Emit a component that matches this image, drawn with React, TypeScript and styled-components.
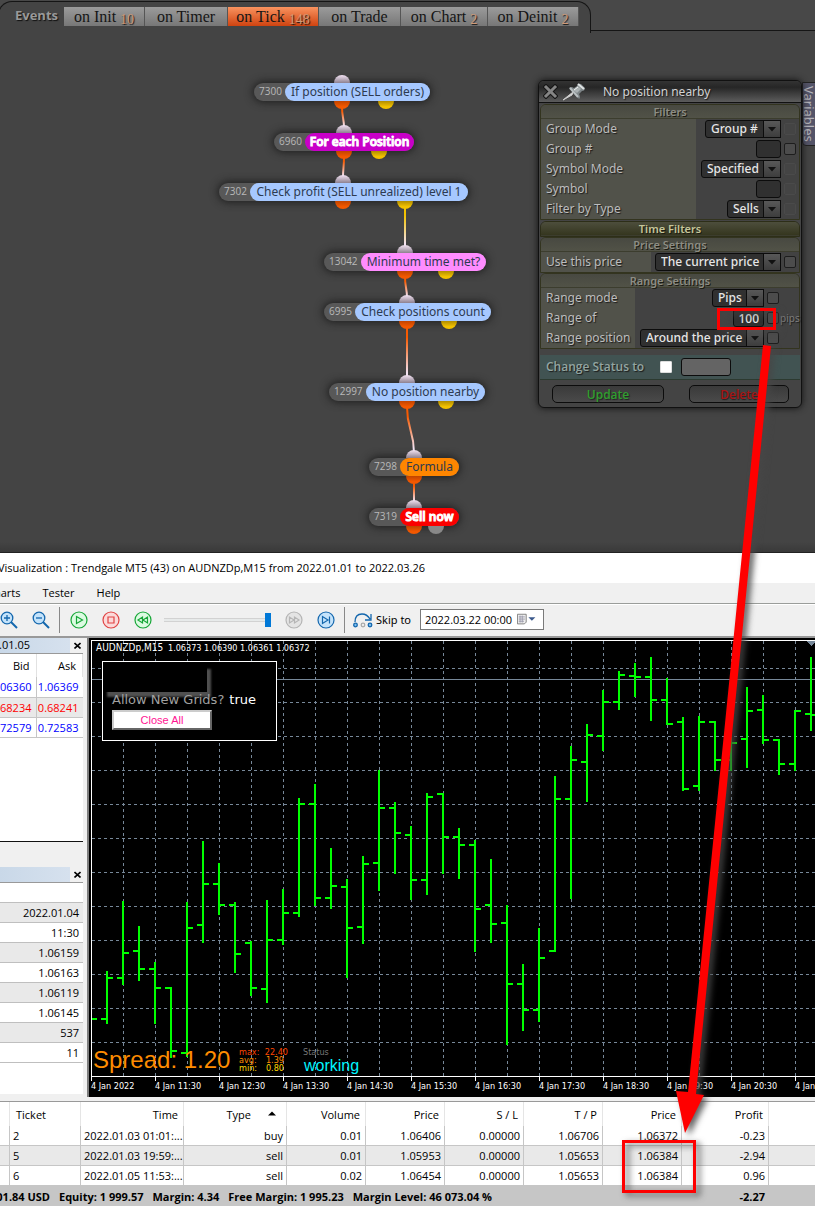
import React from 'react';
import styled, { createGlobalStyle, css } from 'styled-components';

const Global = createGlobalStyle`
  * { box-sizing: border-box; }
  body { margin: 0; background: #fff; }
  #root { overflow: hidden; position: relative; }
  button, input, select { font: inherit; margin: 0; border-radius: 0; }
`;

const ui = `'Noto Sans', 'Open Sans', sans-serif`;
const desk = `'Open Sans', 'Noto Sans', sans-serif`;

/* ---------- Strategy builder ---------- */

const Builder = styled.section`
  position: relative;
  height: 553px;
  overflow: hidden;
  background: linear-gradient(#444 0, #444 542px, #393939 552px);
  border-bottom: 1px solid #222;
  font: 12px/18px ${ui};
`;

const Header = styled.header`
  display: flex;
  height: 31px;
  background: #484848;
`;

const EventBar = styled.nav`
  display: flex;
  align-items: flex-start;
  height: 32px;
  margin: 1px 0 0 -2px;
  padding: 5px 11px 0 16px;
  background: #444;
  border: solid #151515;
  border-width: 1px 1px 0 1px;
  border-radius: 14px 14px 0 0;
`;

const HeaderRest = styled.div`
  flex: 1;
  border-bottom: 1px solid #151515;
`;

const EventTitle = styled.span`
  width: 49px;
  font: 700 13px/17px ${desk};
  color: #999;
  text-shadow: 1px 1px 1px #111;
`;

const Tab = styled.button<{ $w: number; $on?: boolean }>`
  display: flex;
  justify-content: center;
  width: ${(p) => p.$w}px;
  height: 19px;
  padding: 0;
  border: 0;
  border-right: 1px solid #555;
  font: 16px/20px 'Liberation Serif', serif;
  color: #151515;
  background: ${(p) => (p.$on ? 'linear-gradient(#f9935f, #cf4310)' : 'linear-gradient(#9b9b9b, #777)')};
`;

const Count = styled.small`
  margin: 5px 0 0 4px;
  font-size: 14px;
  line-height: 16px;
  color: #d09a76;
  text-shadow: 1px 1px 1px #111;
`;

const tabs = [
  { name: 'on Init', count: '10', w: 81 },
  { name: 'on Timer', w: 83 },
  { name: 'on Tick', count: '148', w: 91, on: true },
  { name: 'on Trade', w: 82 },
  { name: 'on Chart', count: '2', w: 87 },
  { name: 'on Deinit', count: '2', w: 91 },
];

type FlowNode = {
  id: string; text: string; x: number; y: number; idW: number; w: number;
  port: number; alt?: number; altColor?: string; color: string; bold?: boolean;
};

const blue = '#a6c8ff';
const nodes: FlowNode[] = [
  { id: '7300', text: 'If position (SELL orders)', x: 254, y: 83, idW: 31, w: 145, port: 342, alt: 386, color: blue },
  { id: '6960', text: 'For each Position', x: 274, y: 133, idW: 31, w: 109, port: 344, alt: 379, color: '#c800c8', bold: true },
  { id: '7302', text: 'Check profit (SELL unrealized) level 1', x: 219, y: 183, idW: 31, w: 218, port: 343, alt: 405, color: blue },
  { id: '13042', text: 'Minimum time met?', x: 324, y: 253, idW: 37, w: 125, port: 405, alt: 446, color: '#ff8cff' },
  { id: '6995', text: 'Check positions count', x: 324, y: 303, idW: 31, w: 136, port: 407, alt: 449, color: blue },
  { id: '12997', text: 'No position nearby', x: 329, y: 383, idW: 37, w: 119, port: 407, alt: 446, color: blue },
  { id: '7298', text: 'Formula', x: 369, y: 458, idW: 31, w: 59, port: 414, color: '#ff8600' },
  { id: '7319', text: 'Sell now', x: 369, y: 508, idW: 31, w: 59, port: 414, alt: 436, altColor: '#888', color: '#fb0000', bold: true },
];

const Links = styled.svg`
  position: absolute;
  left: 0;
  top: 0;
  width: 500px;
  height: 552px;
`;

const NodeBox = styled.div<{ $x: number; $y: number }>`
  position: absolute;
  left: ${(p) => p.$x}px;
  top: ${(p) => p.$y}px;
  display: flex;
  height: 18px;
  border-radius: 9px;
  background: #585858;
  box-shadow: 0 0 9px 1px #1c1c1c;
`;

const NodeId = styled.span<{ $w: number }>`
  width: ${(p) => p.$w}px;
  padding-left: 5px;
  font: 10px/17px ${desk};
  color: #b8b8b8;
`;

const NodeLabel = styled.span<{ $w: number; $c: string; $bold?: boolean }>`
  width: ${(p) => p.$w}px;
  border-radius: 9px;
  background: ${(p) => p.$c};
  color: ${(p) => (p.$bold ? '#fff' : '#2d3a50')};
  font: ${(p) => (p.$bold ? `600 12px/18px ${desk}` : `12px/18px ${ui}`)};
  -webkit-text-stroke: ${(p) => (p.$bold ? '1px #fff' : '0')};
  paint-order: stroke;
  text-align: center;
  white-space: nowrap;
`;

function FlowCanvas() {
  const link = (x1: number, y1: number, x2: number, y2: number, c: string, i: number) => (
    <g key={i}>
      <linearGradient id={`lk${i}`} gradientUnits="userSpaceOnUse" x1="0" x2="0" y1={y1} y2={y2}>
        <stop offset=".2" stopColor={c} /><stop offset=".9" stopColor="#f3e3f3" />
      </linearGradient>
      <path d={`M${x1} ${y1}C${x1} ${(y1 + y2) / 2} ${x2} ${(y1 + y2) / 2} ${x2} ${y2}`} fill="none" stroke={`url(#lk${i})`} strokeWidth="2" />
    </g>
  );
  const half = (x: number, y: number, c: string) => <path d={`M${x - 8} ${y}a8 8 0 0 0 16 0z`} fill={c} />;
  return (
    <>
      {nodes.map((n) => (
        <NodeBox key={n.id} $x={n.x} $y={n.y}>
          <NodeId $w={n.idW}>{n.id}</NodeId>
          <NodeLabel $w={n.w} $c={n.color} $bold={n.bold}>{n.text}</NodeLabel>
        </NodeBox>
      ))}
      <Links aria-hidden="true">
        <defs>
          <linearGradient id="in" x1="0" x2="0" y1="0" y2="1"><stop stopColor="#f3e3f3" /><stop offset="1" stopColor="#8d818f" /></linearGradient>
          <linearGradient id="out" x1="0" x2="0" y1="0" y2="1"><stop stopColor="#c04400" /><stop offset=".7" stopColor="#f35800" /></linearGradient>
          <linearGradient id="alt" x1="0" x2="0" y1="0" y2="1"><stop stopColor="#b08c00" /><stop offset=".7" stopColor="#f2c200" /></linearGradient>
        </defs>
        {nodes.slice(1).map((n, i) => {
          const p = nodes[i];
          const yellow = i === 2;
          return link(yellow ? 405 : p.port, p.y + 24, n.port, n.y - 5, yellow ? '#f2c200' : '#f85a00', i);
        })}
        {nodes.map((n) => (
          <g key={n.id}>
            <path d={`M${n.port - 8} ${n.y}a8 8 0 0 1 16 0z`} fill="url(#in)" />
            {half(n.port, n.y + 18, 'url(#out)')}
            {n.alt && half(n.alt, n.y + 18, n.altColor || 'url(#alt)')}
          </g>
        ))}
      </Links>
    </>
  );
}

const Inspector = styled.aside`
  position: absolute;
  left: 538px;
  top: 80px;
  width: 264px;
  padding-bottom: 4px;
  border: 1px solid #111;
  border-radius: 6px;
  background: #444;
  box-shadow: 0 0 7px #111;
  color: #bdbdbd;
  text-shadow: 1px 1px 1px #1c1c1c;
`;

const InspectorTitle = styled.header`
  display: flex;
  align-items: center;
  height: 22px;
  margin-bottom: 1px;
  padding-left: 4px;
  border-bottom: 1px solid #111;
  border-radius: 5px 5px 0 0;
  background: linear-gradient(#333, #262626 30%, #5c5c5c);
  color: #d2d2d2;
  svg { margin-right: 4px; }
  h2 { margin: 0 0 0 13px; font: 12px/20px ${ui}; }
`;

const IconButton = styled.button`
  display: flex;
  padding: 0;
  border: 0;
  background: none;
`;

const Group = styled.fieldset<{ $labelW: number }>`
  min-width: 0;
  margin: 0 1px;
  padding: 0;
  border: 1px solid #33341f;
  border-radius: 6px 6px 0 0;
  background: linear-gradient(90deg, #51524a ${(p) => p.$labelW}px, #424242 ${(p) => p.$labelW}px);
`;

const GroupTitle = styled.h3<{ $strong?: boolean }>`
  height: 14px;
  margin: 0;
  border-bottom: 1px solid #3c3d2e;
  border-radius: 5px 5px 0 0;
  background: ${(p) => (p.$strong ? 'linear-gradient(#4d4e3c, #35361f)' : 'linear-gradient(#484941, #515247)')};
  color: ${(p) => (p.$strong ? '#c6c69a' : '#8d8d84')};
  font: 600 11px/13px ${ui};
  text-align: center;
  text-shadow: 1px 1px 0 #1c1c14;
`;

const Divider = styled.div`
  margin: 1px 1px 0;
  border: 1px solid #2d2e18;
  border-radius: 6px 6px 0 0;
`;

const Field = styled.div<{ $wide?: boolean }>`
  display: flex;
  align-items: center;
  height: 20px;
  padding: 0 ${(p) => (p.$wide ? 0 : 3)}px 0 5px;
  > label { flex: 1; white-space: nowrap; }
`;

const ctrl = css`
  height: 18px;
  border: 1px solid #0c0c0c;
  border-radius: 3px;
  background: #303030;
  color: #e6e6e6;
`;

const SelectWrap = styled.span`
  position: relative;
  display: flex;
`;

const Select = styled.select<{ $w: number }>`
  ${ctrl}
  width: ${(p) => p.$w}px;
  padding: 0 18px 0 5px;
  appearance: none;
  font: 500 12px/16px ${ui};
`;

const Arrow = styled.span`
  position: absolute;
  right: 0;
  top: 0;
  display: grid;
  place-items: center;
  width: 18px;
  height: 18px;
  border: 1px solid #0c0c0c;
  background: linear-gradient(#585858, #3d3d3d);
  pointer-events: none;
`;

const TextBox = styled.input<{ $w: number }>`
  ${ctrl}
  width: ${(p) => p.$w}px;
  padding: 0 4px;
  font: 500 12px/16px ${ui};
  text-align: right;
`;

const Check = styled.input<{ $dim?: boolean }>`
  appearance: none;
  width: 12px;
  height: 12px;
  margin: 0 0 0 3px;
  border: 1px solid ${(p) => (p.$dim ? '#4a4a4a' : '#1d1d1d')};
  border-radius: 2px;
  background: ${(p) => (p.$dim ? '#444' : '#4c4c4c')};
`;

const Unit = styled.span`
  width: 20px;
  padding-left: 1px;
  font-size: 10px;
  color: #7d7d7d;
`;

const StatusRow = styled.div`
  display: flex;
  align-items: center;
  height: 25px;
  margin: 6px 1px 0;
  padding-left: 6px;
  border-bottom: 1px solid #2c3a30;
  background: #415352;
  color: #93a5a1;
  font: 600 12px/18px ${desk};
  label { width: 114px; }
`;

const WhiteCheck = styled.input`
  appearance: none;
  width: 12px;
  height: 12px;
  background: #fff;
  border: 1px solid #ddd;
  border-radius: 1px;
`;

const StatusText = styled.input`
  ${ctrl}
  width: 50px;
  margin-left: 9px;
  background: #646464;
`;

const Actions = styled.div`
  display: flex;
  justify-content: space-between;
  padding: 5px 12px 0 13px;
`;

const Action = styled.button<{ $w: number; $c: string }>`
  ${ctrl}
  width: ${(p) => p.$w}px;
  border-radius: 5px;
  background: linear-gradient(#3a3a3a, #4a4a4a);
  font: 600 12px/16px ${desk};
  color: ${(p) => p.$c};
  text-shadow: 1px 1px 1px #222;
`;

const VariablesTab = styled.button`
  position: absolute;
  right: -1px;
  top: 82px;
  width: 14px;
  height: 64px;
  padding: 0;
  writing-mode: vertical-rl;
  border: 1px solid #222;
  border-radius: 0 0 0 4px;
  background: #545468;
  color: #b4b4bc;
  font: 13px/12px ${ui};
`;

function Dropdown({ id, w, value }: { id: string; w: number; value: string }) {
  return (
    <SelectWrap>
      <Select id={id} $w={w} defaultValue={value}><option>{value}</option></Select>
      <Arrow><svg width="8" height="5"><path d="M0 0h8L4 4.5z" fill="#111" /></svg></Arrow>
    </SelectWrap>
  );
}

type RowSpec = { label: string; w: number; value?: string; text?: boolean; dim?: boolean; unit?: string };

function Rows({ rows, unitCol }: { rows: RowSpec[]; unitCol?: boolean }) {
  return (
    <>
      {rows.map((r) => {
        const id = r.label.replace(/\W+/g, '-').toLowerCase();
        return (
          <Field key={r.label} $wide={unitCol}>
            <label htmlFor={id}>{r.label}</label>
            {r.text ? <TextBox id={id} $w={r.w} defaultValue={r.value} /> : <Dropdown id={id} w={r.w} value={r.value || ''} />}
            <Check type="checkbox" aria-label={`${r.label} variable`} $dim={r.dim} />
            {unitCol && <Unit>{r.unit}</Unit>}
          </Field>
        );
      })}
    </>
  );
}

function NodeInspector() {
  return (
    <Inspector>
      <InspectorTitle>
        <IconButton aria-label="Close">
          <svg width="15" height="15" viewBox="0 0 15 15"><path d="M3 3l9 9M12 3l-9 9" stroke="#151515" strokeWidth="5" strokeLinecap="square" /><path d="M3 3l9 9M12 3l-9 9" stroke="#858585" strokeWidth="3" strokeLinecap="square" /></svg>
        </IconButton>
        <IconButton aria-label="Pin">
          <svg width="24" height="18" viewBox="0 0 24 18">
            <path d="M1 17l10-8-1 3z" fill="#ddd" stroke="#ccc" />
            <path d="M7 5q2-2 5 0l3-2q0-3 4-2l4 4q0 3-3 3l-3 3q2 4 0 5z" fill="#7d8487" />
            <path d="M8 5l8 9" stroke="#b9bfc1" strokeWidth="2" />
            <path d="M11 7l5-4 3 3-4 4z" fill="#aab1b3" /><path d="M16 1l6 5" stroke="#dfe3e4" strokeWidth="2" /><path d="M12 7l4-3" stroke="#f2f4f4" />
          </svg>
        </IconButton>
        <h2>No position nearby</h2>
      </InspectorTitle>
      <Group $labelW={155}>
        <GroupTitle>Filters</GroupTitle>
        <Rows rows={[
          { label: 'Group Mode', w: 76, value: 'Group #', dim: true },
          { label: 'Group #', w: 25, text: true },
          { label: 'Symbol Mode', w: 80, value: 'Specified', dim: true },
          { label: 'Symbol', w: 25, text: true, dim: true },
          { label: 'Filter by Type', w: 54, value: 'Sells', dim: true },
        ]} />
      </Group>
      <Divider><GroupTitle $strong>Time Filters</GroupTitle></Divider>
      <Group $labelW={110}>
        <GroupTitle>Price Settings</GroupTitle>
        <Rows rows={[{ label: 'Use this price', w: 126, value: 'The current price' }]} />
      </Group>
      <Group $labelW={94}>
        <GroupTitle>Range Settings</GroupTitle>
        <Rows unitCol rows={[
          { label: 'Range mode', w: 52, value: 'Pips' },
          { label: 'Range of', w: 31, value: '100', text: true, unit: 'pips' },
          { label: 'Range position', w: 124, value: 'Around the price' },
        ]} />
      </Group>
      <StatusRow>
        <label htmlFor="st">Change Status to</label>
        <WhiteCheck id="st" type="checkbox" />
        <StatusText aria-label="Status text" />
      </StatusRow>
      <Actions>
        <Action $w={112} $c="#2f9f2f">Update</Action>
        <Action $w={100} $c="#a81414">Delete</Action>
      </Actions>
    </Inspector>
  );
}

/* ---------- Tester window ---------- */

const Tester = styled.section`
  background: #f0f0f0;
  font: 11px/20px ${desk};
  color: #000;
`;

const TitleBar = styled.h1`
  height: 30px;
  margin: 0 0 0 -2px;
  background: #fff;
  font: 11px/30px ${desk};
  white-space: nowrap;
`;

const MenuBar = styled.nav`
  display: flex;
  gap: 22px;
  height: 21px;
  margin-left: -13px;
  border-bottom: 1px solid #9a9d9a;
`;

const MenuItem = styled.button`
  padding: 0;
  border: 0;
  background: none;
  font: 11px/20px ${desk};
`;

const Toolbar = styled.div`
  display: flex;
  align-items: center;
  height: 32px;
  margin-left: -7px;
  padding-bottom: 2px;
  border-top: 1px solid #fff;
`;

const Tool = styled.button`
  display: grid;
  place-items: center;
  width: 32px;
  height: 28px;
  padding: 0;
  border: 0;
  background: none;
`;

const Sep = styled.i<{ $l: number; $r: number }>`
  width: 1px;
  height: 26px;
  margin: 0 ${(p) => p.$r}px 0 ${(p) => p.$l}px;
  background: #888;
`;

const Speed = styled.input`
  appearance: none;
  width: 107px;
  height: 16px;
  margin: 0 7px 0 5px;
  background: linear-gradient(#d2d2d2, #d2d2d2) 0 6px / 100% 1px no-repeat, linear-gradient(#e7eaea, #e7eaea) 0 7px / 100% 2px no-repeat, linear-gradient(#d2d2d2, #d2d2d2) 0 9px / 100% 1px no-repeat;
  &::-webkit-slider-thumb {
    appearance: none;
    width: 6px;
    height: 14px;
    background: #0078d7;
  }
`;

const SkipLabel = styled.label`
  display: flex;
  align-items: center;
  gap: 3px;
  width: 67px;
  font: 12px/20px 'Noto Sans', sans-serif;
  font-size: 11px;
  white-space: nowrap;
`;

const DateBox = styled.span`
  display: flex;
  align-items: center;
  gap: 2px;
  width: 124px;
  height: 21px;
  padding: 0 5px 0 4px;
  background: #fff;
  border: 1px solid #7a7a7a;
  input {
    width: 90px;
    padding: 0;
    border: 0;
    background: none;
    font: 11px/18px ${desk};
  }
`;

const Workspace = styled.div`
  display: flex;
  border-top: 2px solid #999;
`;

const SideColumn = styled.div`
  display: flex;
  flex-direction: column;
  width: 89px;
  overflow: hidden;
  padding-right: 4px;
  border-right: 2px solid #7e7e7e;
`;

const PaneHead = styled.div`
  display: flex;
  justify-content: space-between;
  height: 16px;
  border-bottom: 1px solid #999;
  font: 11px/14px ${desk};
  span {
    display: flex;
    justify-content: flex-end;
    width: 70px;
    padding-right: 40px;
    background: linear-gradient(90deg, #c9d8e8, #d6e1ee);
  }
`;

const CloseButton = styled.button`
  display: grid;
  place-items: center;
  width: 11px;
  padding: 0;
  border: 0;
  background: none;
`;

const Pane = styled.div<{ $h: number; $gap?: boolean }>`
  height: ${(p) => p.$h}px;
  background: #fff;
  border-bottom: ${(p) => (p.$gap ? '1px solid #111' : '0')};
  margin-bottom: ${(p) => (p.$gap ? 25 : 3)}px;
`;

const Quotes = styled.table`
  width: 103px;
  margin-left: -20px;
  border-collapse: collapse;
  table-layout: fixed;
  font: 11px/19px ${desk};
  th { height: 23px; font-weight: 400; text-align: right; padding: 0 6px 0 0; border-right: 1px solid #e2e2e2; }
  td { height: 20px; padding: 0 4px 0 0; text-align: right; border-bottom: 1px solid #c6c6c6; }
  td:first-child { border-right: 1px solid #c6c6c6; }
`;

const QuoteRow = styled.tr<{ $c: string; $alt?: boolean }>`
  color: ${(p) => p.$c};
  background: ${(p) => (p.$alt ? '#e9e9e9' : '#fff')};
`;

const DataList = styled.ul`
  margin: 0;
  padding: 0;
  list-style: none;
  font: 11px/19px ${desk};
  li {
    height: 20px;
    padding-right: 4px;
    text-align: right;
    border-bottom: 1px solid #bfbfbf;
  }
  li:nth-child(even) { background: #e9e9e9; }
`;

const ChartArea = styled.div`
  position: relative;
  flex: 1;
  min-width: 0;
  height: 459px;
  background: #000;
  svg { display: block; width: 100%; height: 459px; }
`;

const InfoBox = styled.div`
  position: absolute;
  left: 13px;
  top: 23px;
  width: 175px;
  height: 80px;
  overflow: hidden;
  padding: 4px 0 0 2px;
  border: 1px solid #fff;
  background: #000;
  font: 13px/16px 'DejaVu Sans', sans-serif;
  color: #a0a0a0;
  p { margin: 0 0 2px 7px; white-space: pre; }
  b { font-weight: 400; color: #fff; margin-left: 5px; }
`;

const Blank = styled.div`
  width: 102px;
  height: 26px;
  background: #000;
  box-shadow: 3px 4px 2px 1px #505050;
`;

const CloseAll = styled.button`
  display: block;
  width: 100px;
  height: 20px;
  margin: 0 0 0 7px;
  padding: 0;
  background: #fff;
  border: 2px solid;
  border-color: #ccc #666 #666 #ccc;
  font: 11px/16px 'Liberation Sans', sans-serif;
  color: #ff1493;
`;

/* open, high, low, close as vertical positions, one bar every 16 px */
const bars = [
  [1019, 1017, 1020, 1019], [1019, 971, 1024, 978], [978, 901, 985, 953], [951, 926, 981, 969], [969, 962, 1024, 988],
  [988, 987, 1058, 1051], [1053, 902, 1057, 928], [925, 841, 943, 884], [884, 863, 915, 905], [905, 902, 973, 954],
  [943, 941, 996, 988], [989, 900, 1003, 940], [940, 889, 945, 913], [913, 798, 917, 804], [804, 784, 906, 898],
  [898, 848, 909, 886], [887, 879, 978, 928], [927, 856, 944, 864], [863, 770, 891, 808], [808, 802, 874, 833],
  [835, 826, 900, 880], [880, 793, 895, 797], [794, 793, 874, 837], [837, 828, 879, 845], [845, 840, 952, 909],
  [905, 859, 943, 924], [923, 905, 1045, 984], [984, 964, 1031, 1010], [1010, 928, 1022, 958], [951, 776, 952, 799],
  [799, 746, 899, 760], [762, 724, 802, 735], [736, 690, 751, 702], [702, 671, 710, 675], [676, 663, 697, 677],
  [677, 657, 721, 700], [700, 678, 725, 724], [722, 717, 791, 789], [786, 716, 791, 722], [722, 721, 771, 760],
  [760, 733, 771, 743], [739, 687, 768, 711], [710, 695, 744, 740], [740, 739, 775, 764], [764, 710, 771, 711],
  [714, 657, 731, 715],
];

const times = ['2022', '11:30', '12:30', '13:30', '14:30', '15:30', '16:30', '17:30', '18:30', '19:30', '20:30', '21:30'];

function PriceChart() {
  return (
    <svg role="img" aria-label="AUDNZDp M15 price chart">
      <g transform="translate(-89 -638)" shapeRendering="crispEdges">
        <g stroke="#778899" strokeDasharray="3 3">
          {Array.from({ length: 60 }, (_, i) => <path key={i} d={`M${123.5 + 32 * i} 641V1076`} />)}
          {Array.from({ length: 12 }, (_, i) => <path key={i} d={`M92 ${668.5 + 34 * i}H2000`} />)}
        </g>
        <path d="M92 679.5H2000" stroke="#778899" />
        <path d="M806 641h10l-5 5z" fill="#778899" />
        <g stroke="#0f0" strokeWidth="2">
          {bars.map(([o, h, l, c], i) => {
            const x = 91 + 16 * i;
            return <path key={i} d={i ? `M${x} ${h}V${l}M${x - 6} ${o}H${x}M${x} ${c}H${x + 6}` : `M${x} ${c}H${x + 6}`} />;
          })}
        </g>
        <path d="M91.5 1077V640.5H2000M91 1076.5H2000" stroke="#fff" fill="none" />
        {times.map((t, i) => <path key={t} d={`M${91.5 + 64 * i} 1077v4`} stroke="#fff" />)}
      </g>
      <g transform="translate(-89 -638)" fill="#fff" fontFamily="DejaVu Sans Condensed, DejaVu Sans, sans-serif" fontSize="9">
        {times.map((t, i) => <text key={t} x={91 + 64 * i} y="1089">4 Jan {t}</text>)}
        <text x="96" y="651" fontSize="10">AUDNZDp,M15</text>
        <text x="168" y="651">1.06373 1.06390 1.06361 1.06372</text>
        <text x="93" y="1068" fontSize="24" fontFamily="Liberation Sans, sans-serif" fill="#ff8c00">Spread: 1.20</text>
        <text x="239" y="1055" fill="#ff4500">max:</text><text x="288" y="1055" textAnchor="end" fill="#ff4500">22.40</text>
        <text x="239" y="1063" fill="#ff8c00">avg:</text><text x="284" y="1063" textAnchor="end" fill="#ff8c00">1.39</text>
        <text x="239" y="1071" fill="#ffd700">min:</text><text x="284" y="1071" textAnchor="end" fill="#ffd700">0.80</text>
        <text x="303" y="1055" fill="#777">Status</text>
        <text x="304" y="1071" fontSize="16" fontFamily="Liberation Sans, sans-serif" fill="#00f5ff">working</text>
      </g>
    </svg>
  );
}

const Trades = styled.table`
  width: 100%;
  margin-top: 4px;
  border-top: 1px solid #999;
  border-collapse: separate;
  border-spacing: 0;
  table-layout: fixed;
  background: #fff;
  font: 11px/19px ${desk};
  th, td { white-space: nowrap; overflow: hidden; text-align: right; }
  th { height: 24px; padding: 0 5px 0 0; border-right: 1px solid #e5e5e5; font-weight: 400; }
  tbody td { height: 20px; padding: 0 3px 0 0; border: solid #c6c6c6; border-width: 0 1px 1px 0; }
  tbody tr:nth-child(even) { background: #e9e9e9; }
  th:last-child, td:last-child { border-right: 0; }
  th:nth-child(2) { text-align: left; padding-left: 6px; }
  tbody td:nth-child(2), tbody td:nth-child(3) { text-align: left; padding-left: 3px; }
  tfoot td { height: 20px; padding: 0 4px 0 0; background: #c6c6c6; font-weight: 700; }
`;

const SortMark = styled.svg`
  margin: 0 5px 3px 17px;
`;

const Account = styled.div`
  display: flex;
  gap: 9px;
  span:first-child { display: flex; justify-content: flex-end; width: 50px; }
`;

const colWidths = [10, 71, 103, 103, 79, 79, 79, 79, 79, 87];
const trades = [
  ['2', '2022.01.03 01:01:...', 'buy', '0.01', '1.06406', '0.00000', '1.06706', '1.06372', '-0.23'],
  ['5', '2022.01.03 19:59:...', 'sell', '0.01', '1.05953', '0.00000', '1.05653', '1.06384', '-2.94'],
  ['6', '2022.01.05 11:53:...', 'sell', '0.02', '1.06454', '0.00000', '1.05653', '1.06384', '0.96'],
];

function Round({ fill, stroke, children }: { fill: string; stroke: string; children: React.ReactNode }) {
  return (
    <svg width="18" height="18" viewBox="0 0 18 18" fill="none" stroke={stroke} strokeWidth="1.2">
      <circle cx="9" cy="9" r="8" fill={fill} />{children}
    </svg>
  );
}

function Lens({ plus }: { plus?: boolean }) {
  return (
    <svg width="18" height="18" viewBox="0 0 18 18" fill="none" stroke="#1467ad" strokeWidth="1.3">
      <path d="M11 11l6 6" strokeWidth="2" /><circle cx="7" cy="7" r="5.8" fill="#c4e3fb" />
      <path d={plus ? 'M4 7h6M7 4v6' : 'M4 7h6'} />
    </svg>
  );
}

function Cross() {
  return <svg width="7" height="7" viewBox="0 0 7 7"><path d="M.5 1l6 5.500M6.500 1l-6 5.500" stroke="#000" strokeWidth="1.6" /></svg>;
}

const Annotation = styled.svg`
  position: absolute;
  left: 0;
  top: 0;
  width: 815px;
  height: 1226px;
  pointer-events: none;
  filter: drop-shadow(4px 3px 3px rgba(70, 70, 70, 0.85));
`;

export default function App() {
  return (
    <>
      <Global />
      <Builder>
        <Header>
          <EventBar>
            <EventTitle>Events</EventTitle>
            {tabs.map((t) => (
              <Tab key={t.name} $w={t.w} $on={t.on}>{t.name}{t.count && <Count>{t.count}</Count>}</Tab>
            ))}
          </EventBar>
          <HeaderRest />
        </Header>
        <FlowCanvas />
        <VariablesTab>Variables</VariablesTab>
        <NodeInspector />
      </Builder>

      <Tester>
        <TitleBar>Visualization : Trendgale MT5 (43) on AUDNZDp,M15 from 2022.01.01 to 2022.03.26</TitleBar>
        <MenuBar>
          <MenuItem>Charts</MenuItem>
          <MenuItem>Tester</MenuItem>
          <MenuItem>Help</MenuItem>
        </MenuBar>
        <Toolbar>
          <Tool aria-label="Zoom in"><Lens plus /></Tool>
          <Tool aria-label="Zoom out"><Lens /></Tool>
          <Sep $l={2} $r={3} />
          <Tool aria-label="Play"><Round fill="#dcfbe2" stroke="#16a637"><path d="M6.5 5.5v7l6-3.5z" /></Round></Tool>
          <Tool aria-label="Stop"><Round fill="#fbdada" stroke="#e04343"><path d="M6 6h6v6H6z" /></Round></Tool>
          <Tool aria-label="Slower"><Round fill="#dcfbe2" stroke="#16a637"><path d="M8.500 6v6L4 9zM13.500 6v6L9 9z" /></Round></Tool>
          <Speed type="range" defaultValue="100" aria-label="Speed" />
          <Tool aria-label="Faster"><Round fill="#e4e4e4" stroke="#b5b5b5"><path d="M4.500 6v6L9 9zM9.500 6v6l4.500-3z" /></Round></Tool>
          <Tool aria-label="Next"><Round fill="#c4e3fb" stroke="#1467ad"><path d="M5.500 5.500v7L11 9zM12.500 5.500v7" /></Round></Tool>
          <Sep $l={2} $r={8} />
          <SkipLabel htmlFor="skip">
            <svg width="20" height="16" viewBox="0 0 20 16" fill="none" stroke="#1467ad" strokeWidth="1.3">
              <path d="M2 10Q2 2 9 2q5 0 8 5M18 2v6h-6" /><circle cx="2.500" cy="13" r="1.800" fill="#7ec0f0" /><circle cx="10" cy="13" r="1.800" stroke="#aaa" /><circle cx="17" cy="13" r="1.800" fill="#7ec0f0" />
            </svg>
            Skip to
          </SkipLabel>
          <DateBox>
            <input id="skip" defaultValue="2022.03.22 00:00" />
            <svg width="24" height="13" viewBox="0 0 24 13"><path d="M.5.500h10v9l-2 2H.500z" fill="#eee" stroke="#777" /><path d="M2 3.500h7M2 6h7M2 8.500h6M3.500 2v8M6 2v8" stroke="#99a" /><path d="M13 4h8l-4 4z" fill="#3c5a8c" /></svg>
          </DateBox>
        </Toolbar>
        <Workspace>
          <SideColumn>
            <PaneHead><span>2022.01.05</span><CloseButton aria-label="Close quotes"><Cross /></CloseButton></PaneHead>
            <Pane $h={188} $gap>
              <Quotes>
                <colgroup><col style={{ width: 56 }} /><col /></colgroup>
                <thead><tr><th>Bid</th><th>Ask</th></tr></thead>
                <tbody>
                  <QuoteRow $c="#00f"><td>1.06360</td><td>1.06369</td></QuoteRow>
                  <QuoteRow $c="#f00" $alt><td>0.68234</td><td>0.68241</td></QuoteRow>
                  <QuoteRow $c="#00f"><td>0.72579</td><td>0.72583</td></QuoteRow>
                </tbody>
              </Quotes>
            </Pane>
            <PaneHead><span /><CloseButton aria-label="Close data"><Cross /></CloseButton></PaneHead>
            <Pane $h={211}>
              <DataList>
                <li />
                {['2022.01.04', '11:30', '1.06159', '1.06163', '1.06119', '1.06145', '537', '11'].map((v) => <li key={v}>{v}</li>)}
              </DataList>
            </Pane>
          </SideColumn>
          <ChartArea>
            <PriceChart />
            <InfoBox>
              <Blank />
              <p>Allow New Grids?<b>true</b></p>
              <CloseAll>Close All</CloseAll>
            </InfoBox>
          </ChartArea>
        </Workspace>
        <Trades>
          <colgroup>{colWidths.map((w, i) => <col key={i} style={{ width: w }} />)}<col /></colgroup>
          <thead>
            <tr>
              <th /><th>Ticket</th><th>Time</th>
              <th>Type<SortMark width="8" height="5"><path d="M0 4.500h8L4 .5z" /></SortMark></th>
              <th>Volume</th><th>Price</th><th>S / L</th><th>T / P</th><th>Price</th><th>Profit</th><th />
            </tr>
          </thead>
          <tbody>
            {trades.map((r) => <tr key={r[0]}><td />{r.map((c, i) => <td key={i}>{c}</td>)}<td /></tr>)}
          </tbody>
          <tfoot>
            <tr>
              <td colSpan={9}>
                <Account><span>2 001.84 USD</span><span>Equity: 1 999.57</span><span>Margin: 4.34</span><span>Free Margin: 1 995.23</span><span>Margin Level: 46 073.04 %</span></Account>
              </td>
              <td>-2.27</td><td />
            </tr>
          </tfoot>
        </Trades>
      </Tester>

      <Annotation aria-hidden="true">
        <path d="M718.500 309.500h56v19h-56zM623.500 1141.500h71v50h-71z" fill="none" stroke="#f00" strokeWidth="3" />
        <path d="M763 345l8 1L696 1094l8 1L685 1133l-9-42 12 1z" fill="#f00" />
      </Annotation>
    </>
  );
}
